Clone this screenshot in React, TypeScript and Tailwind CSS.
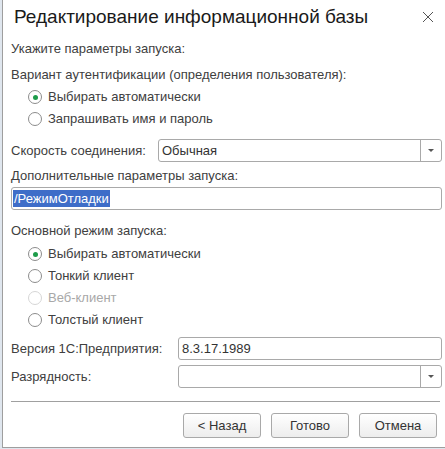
import React from "react";

const font = { fontFamily: '"Liberation Sans", Arial, sans-serif' };

function Radio({ label, checked, disabled }: { label: string; checked?: boolean; disabled?: boolean }) {
  return (
    <div className="flex items-center h-[22px] pl-[17px]">
      <span
        className={`w-[14px] h-[14px] rounded-full border flex items-center justify-center bg-white ${
          disabled ? "border-[#d6d6d6]" : "border-[#8c8c8c]"
        }`}
      >
        {checked && <span className="w-[5px] h-[5px] rounded-full bg-[#1d9c4a]" />}
      </span>
      <span className={`ml-[6px] text-[13px] ${disabled ? "text-[#a8a8a8]" : "text-[#404040]"}`}>{label}</span>
    </div>
  );
}

function Select({ value, className }: { value?: string; className: string }) {
  return (
    <div className={`h-[23px] border border-[#a9a9a9] rounded-[3px] bg-white flex items-stretch ${className}`}>
      <div className="flex-1 flex items-center pl-[3px] text-[13px] text-[#333]">{value}</div>
      <div className="w-[21px] border-l border-[#a9a9a9] flex items-center justify-center">
        <span className="w-0 h-0 border-l-[3px] border-r-[3px] border-t-[3px] border-l-transparent border-r-transparent border-t-[#555]" />
      </div>
    </div>
  );
}

function Btn({ label }: { label: string }) {
  return (
    <div className="w-[78px] h-[25px] border border-[#a9a9a9] rounded-[3px] bg-gradient-to-b from-white to-[#ededed] flex items-center justify-center text-[13px] text-[#333]">
      {label}
    </div>
  );
}

export default function App() {
  return (
    <div className="w-[445px] h-[449px] bg-[#dfe6ee] pl-[2px]" style={font}>
      <div className="w-[443px] h-[448px] bg-white border-l border-b border-[#9e9e9e] flex flex-col">
        <div className="h-[34px] flex items-center pl-[11px] pr-[10px]">
          <span className="text-[19px] text-[#1a1a1a] flex-1 pt-[1px]">Редактирование информационной базы</span>
          <svg width="12" height="12" viewBox="0 0 12 12" className="mr-[1px]">
            <path d="M1 1 L11 11 M11 1 L1 11" stroke="#555" strokeWidth="1" />
          </svg>
        </div>
        <div className="pl-[8px] pr-[3px] flex flex-col text-[13px] text-[#404040]">
          <div className="mt-[7px] h-[16px] leading-[16px]">Укажите параметры запуска:</div>
          <div className="mt-[10px] h-[16px] leading-[16px]">Вариант аутентификации (определения пользователя):</div>
          <div className="mt-[3px]">
            <Radio label="Выбирать автоматически" checked />
            <Radio label="Запрашивать имя и пароль" />
          </div>
          <div className="mt-[9px] flex items-center">
            <span className="w-[147px]">Скорость соединения:</span>
            <Select value="Обычная" className="flex-1" />
          </div>
          <div className="mt-[6px] h-[16px] leading-[16px]">Дополнительные параметры запуска:</div>
          <div className="mt-[3px] h-[23px] border border-[#a9a9a9] rounded-[3px] flex items-center pl-[1px]">
            <span className="bg-[#3e6dc8] text-white leading-[17px] px-[1px]">/РежимОтладки</span>
          </div>
          <div className="mt-[13px] h-[16px] leading-[16px]">Основной режим запуска:</div>
          <div className="mt-[4px]">
            <Radio label="Выбирать автоматически" checked />
            <Radio label="Тонкий клиент" />
            <Radio label="Веб-клиент" disabled />
            <Radio label="Толстый клиент" />
          </div>
          <div className="mt-[6px] flex items-center">
            <span className="w-[167px]">Версия 1С:Предприятия:</span>
            <div className="flex-1 h-[23px] border border-[#a9a9a9] rounded-[3px] flex items-center pl-[3px] text-[#333]">
              8.3.17.1989
            </div>
          </div>
          <div className="mt-[5px] flex items-center">
            <span className="w-[167px]">Разрядность:</span>
            <Select className="flex-1" />
          </div>
          <div className="mt-[13px] mr-[2px] border-t border-[#a0a0a0]" />
          <div className="mt-[11px] flex justify-end gap-[10px] pr-[5px]">
            <Btn label="< Назад" />
            <Btn label="Готово" />
            <Btn label="Отмена" />
          </div>
        </div>
      </div>
    </div>
  );
}
